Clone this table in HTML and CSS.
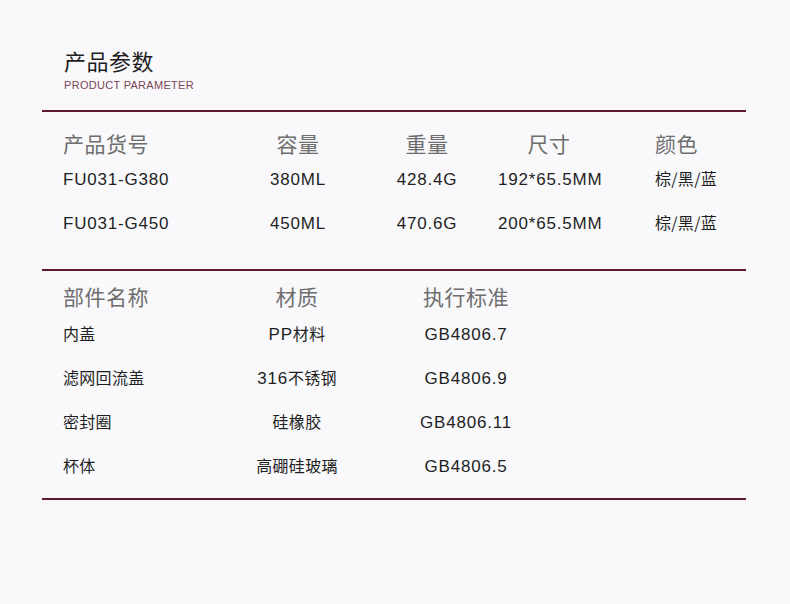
FILE: index.html
```html
<!DOCTYPE html>
<html lang="zh">
<head>
<meta charset="utf-8">
<link rel="stylesheet" href="styles.css">
</head>
<body>
<div class="page">
  <div class="heading">
    <div class="title">产品参数</div>
    <div class="subtitle">PRODUCT PARAMETER</div>
  </div>
  <div class="rule"></div>
  <div class="table t1">
    <div class="row head">
      <div class="c1">产品货号</div><div class="c2">容量</div><div class="c3">重量</div><div class="c4">尺寸</div><div class="c5">颜色</div>
    </div>
    <div class="row">
      <div class="c1">FU031-G380</div><div class="c2">380ML</div><div class="c3">428.4G</div><div class="c4">192*65.5MM</div><div class="c5"><span class="zh">棕/黑/蓝</span></div>
    </div>
    <div class="row">
      <div class="c1">FU031-G450</div><div class="c2">450ML</div><div class="c3">470.6G</div><div class="c4">200*65.5MM</div><div class="c5"><span class="zh">棕/黑/蓝</span></div>
    </div>
  </div>
  <div class="rule"></div>
  <div class="table t2">
    <div class="row head">
      <div class="c1">部件名称</div><div class="c2">材质</div><div class="c3">执行标准</div>
    </div>
    <div class="row">
      <div class="c1"><span class="zh">内盖</span></div><div class="c2">PP<span class="zh">材料</span></div><div class="c3">GB4806.7</div>
    </div>
    <div class="row">
      <div class="c1"><span class="zh">滤网回流盖</span></div><div class="c2">316<span class="zh">不锈钢</span></div><div class="c3">GB4806.9</div>
    </div>
    <div class="row">
      <div class="c1"><span class="zh">密封圈</span></div><div class="c2"><span class="zh">硅橡胶</span></div><div class="c3">GB4806.11</div>
    </div>
    <div class="row">
      <div class="c1"><span class="zh">杯体</span></div><div class="c2"><span class="zh">高硼硅玻璃</span></div><div class="c3">GB4806.5</div>
    </div>
  </div>
  <div class="rule"></div>
</div>
</body>
</html>
```
FILE: styles.css
```css
html, body {
  margin: 0;
  padding: 0;
  background: #f9f9fb;
}
body {
  font-family: "Liberation Sans", Arial, "Noto Sans CJK SC", sans-serif;
  color: #222;
  width: 790px;
  height: 604px;
}
.page {
  padding: 46px 0 0 42px;
  width: 704px;
}
.heading {
  padding-left: 22px;
  margin-bottom: 18px;
}
.title {
  font-family: "Noto Sans CJK SC", sans-serif;
  font-size: 22px;
  line-height: 28px;
  letter-spacing: 0.5px;
  color: #1e1e1e;
}
.subtitle {
  font-size: 11px;
  line-height: 14px;
  margin-top: 4px;
  color: #7a4658;
  letter-spacing: 0.3px;
}
.rule {
  height: 2px;
  background: #5e1b30;
}
.table {
  padding-left: 21px;
}
.t1 {
  padding-top: 18px;
  padding-bottom: 23px;
}
.t2 {
  padding-top: 12px;
  padding-bottom: 9px;
}
.row {
  display: grid;
  height: 44px;
  align-items: center;
  font-size: 17px;
  letter-spacing: 0.8px;
  color: #1f1f1f;
}
.row > div {
  white-space: nowrap;
  line-height: 20px;
}
.zh {
  font-family: "Noto Sans CJK SC", sans-serif;
  font-size: 16px;
  line-height: 14px;
  letter-spacing: 0.3px;
}
.row.head {
  height: 26px;
  margin-bottom: 2px;
  font-family: "Noto Sans CJK SC", sans-serif;
  font-size: 21px;
  letter-spacing: 0.5px;
  color: #6e6e6e;
}
.row.head > div {
  line-height: 26px;
}
.t2 .row.head {
  margin-bottom: 4px;
}
.t1 .row {
  grid-template-columns: 177px 116px 142px 102px 1fr;
}
.t2 .row {
  grid-template-columns: 177px 114px 224px 1fr;
}
.c2, .c3, .c4 {
  text-align: center;
}
.c5 {
  padding-left: 55px;
}
```
